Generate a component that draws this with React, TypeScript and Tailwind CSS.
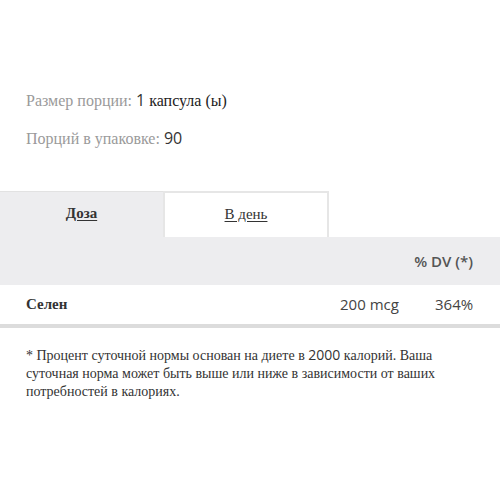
import React from "react";

export default function App() {
  return (
    <div className="w-[500px] h-[500px] bg-white overflow-hidden font-['Liberation_Serif','Times_New_Roman',serif]">
      <div className="pt-[88px] pl-[26px] text-[16px] leading-6">
        <div>
          <span className="text-[#9a9a9a]">Размер порции: </span>
          <span className="font-['Open_Sans',sans-serif] text-[#333]">1</span>
          <span className="text-[#222]"> капсула (ы)</span>
        </div>
        <div className="mt-[13px]">
          <span className="text-[#9a9a9a]">Порций в упаковке: </span>
          <span className="font-['Open_Sans',sans-serif] text-[#333]">90</span>
        </div>
      </div>

      <div className="mt-[40px] flex h-[46px]">
        <div className="w-[163px] bg-[#ededef] border-t border-[#e2e2e2] flex items-center justify-center">
          <span className="text-[15px] font-bold text-[#333] underline underline-offset-2 mb-[2px]">Доза</span>
        </div>
        <div className="w-[166px] bg-white border-t-2 border-x-2 border-[#e6e6e6] flex items-center justify-center">
          <span className="text-[15px] text-[#333] underline underline-offset-2 mb-[2px]">В день</span>
        </div>
      </div>

      <div className="h-[48px] bg-[#ededef] flex items-center justify-end pr-[27px]">
        <span className="font-['Open_Sans',sans-serif] text-[15px] font-semibold text-[#555]">% DV (*)</span>
      </div>

      <div className="h-[39px] bg-white flex items-center border-b-4 border-[#dcdcdc] box-content">
        <span className="pl-[26px] text-[15px] font-bold text-[#333] flex-1">Селен</span>
        <span className="font-['Open_Sans',sans-serif] text-[15px] text-[#444] w-[95px]">200 mcg</span>
        <span className="font-['Open_Sans',sans-serif] text-[15px] text-[#444] w-[65px]">364%</span>
      </div>

      <div className="mt-[18px] pl-[26px] pr-[14px] text-[14px] leading-[18px] text-[#333]">
        * Процент суточной нормы основан на диете в <span className="font-['Open_Sans',sans-serif]">2000</span> калорий. Ваша суточная норма может быть выше или ниже в зависимости от ваших потребностей в калориях.
      </div>
    </div>
  );
}
